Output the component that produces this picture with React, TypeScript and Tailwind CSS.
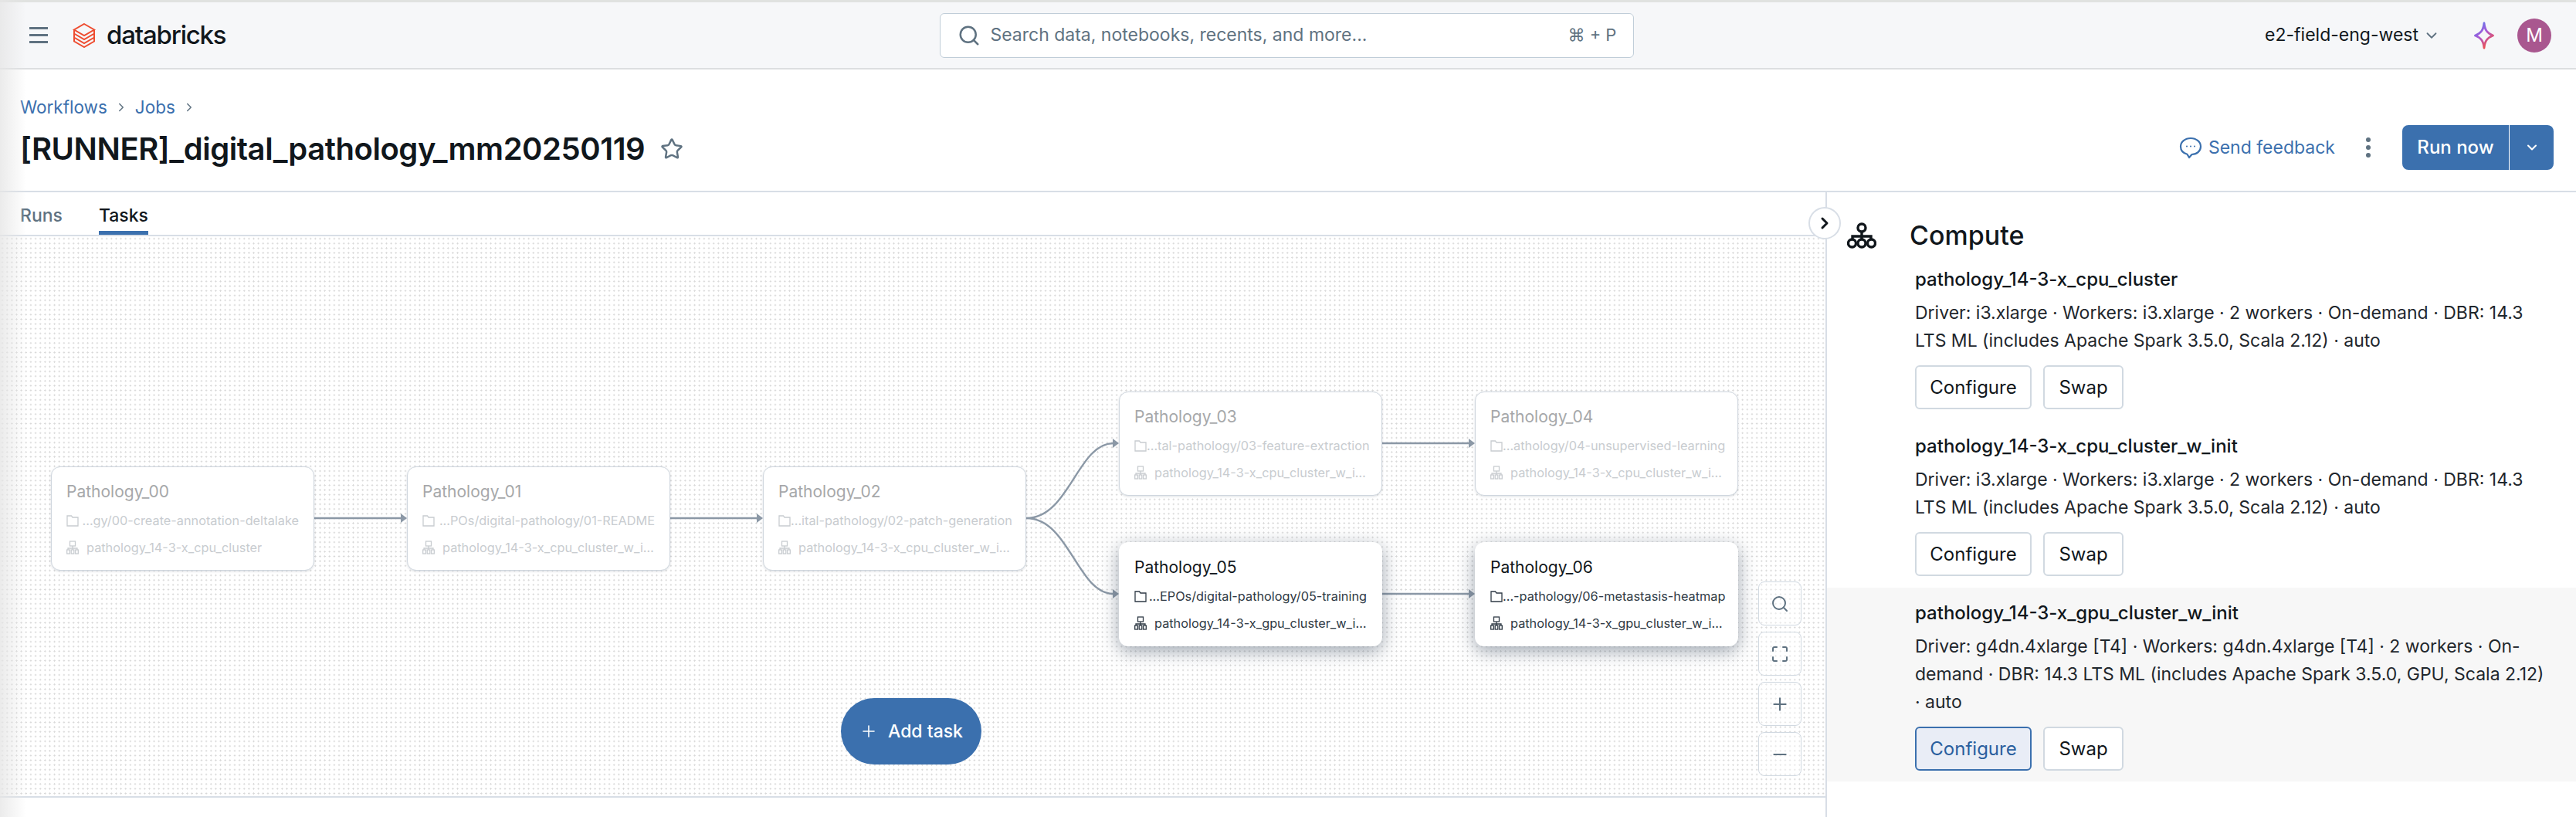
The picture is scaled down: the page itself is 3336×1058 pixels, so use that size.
import React from 'react';
import { ChevronDown, ChevronRight, Maximize, Minus, Plus, Search, Star } from 'lucide-react';

const blue = 'bg-[#3b70ae]';

type TaskNode = {
  name: string;
  path: string;
  cluster: string;
  left: string;
  top: string;
  active?: boolean;
};

const nodes: TaskNode[] = [
  { name: 'Pathology_00', path: '...gy/00-create-annotation-deltalake', cluster: 'pathology_14-3-x_cpu_cluster', left: 'left-[66px]', top: 'top-[298px]' },
  { name: 'Pathology_01', path: '...POs/digital-pathology/01-README', cluster: 'pathology_14-3-x_cpu_cluster_w_init', left: 'left-[527px]', top: 'top-[298px]' },
  { name: 'Pathology_02', path: '...ital-pathology/02-patch-generation', cluster: 'pathology_14-3-x_cpu_cluster_w_init', left: 'left-[988px]', top: 'top-[298px]' },
  { name: 'Pathology_03', path: '...tal-pathology/03-feature-extraction', cluster: 'pathology_14-3-x_cpu_cluster_w_init', left: 'left-[1449px]', top: 'top-[201px]' },
  { name: 'Pathology_04', path: '...athology/04-unsupervised-learning', cluster: 'pathology_14-3-x_cpu_cluster_w_init', left: 'left-[1910px]', top: 'top-[201px]' },
  { name: 'Pathology_05', path: '...EPOs/digital-pathology/05-training', cluster: 'pathology_14-3-x_gpu_cluster_w_init', left: 'left-[1449px]', top: 'top-[396px]', active: true },
  { name: 'Pathology_06', path: '...-pathology/06-metastasis-heatmap', cluster: 'pathology_14-3-x_gpu_cluster_w_init', left: 'left-[1910px]', top: 'top-[396px]', active: true },
];

const clusters = [
  {
    name: 'pathology_14-3-x_cpu_cluster',
    desc: 'Driver: i3.xlarge · Workers: i3.xlarge · 2 workers · On-demand · DBR: 14.3 LTS ML (includes Apache Spark 3.5.0, Scala 2.12) · auto',
    row: 'pb-[31px] pl-[114px] pr-[32px]',
  },
  {
    name: 'pathology_14-3-x_cpu_cluster_w_init',
    desc: 'Driver: i3.xlarge · Workers: i3.xlarge · 2 workers · On-demand · DBR: 14.3 LTS ML (includes Apache Spark 3.5.0, Scala 2.12) · auto',
    row: 'pb-[15px] pl-[114px] pr-[32px]',
  },
  {
    name: 'pathology_14-3-x_gpu_cluster_w_init',
    desc: 'Driver: g4dn.4xlarge [T4] · Workers: g4dn.4xlarge [T4] · 2 workers · On-demand · DBR: 14.3 LTS ML (includes Apache Spark 3.5.0, GPU, Scala 2.12) · auto',
    row: 'bg-[#f7f7f7] pb-[14px] pl-[114px] pr-[32px] pt-[16px]',
    active: true,
  },
];

function Logo() {
  return (
    <svg width="30" height="32" viewBox="0 0 30 32" fill="none" stroke="#ee4c30" strokeWidth="2">
      <path d="M15 1 L28 8.5 L15 16 L2 8.5 Z" />
      <path d="M2 8.5 V13.5 L15 21 L28 13.5 V8.5" />
      <path d="M2 13.5 V18.5 L15 26 L28 18.5 V13.5" />
      <path d="M2 18.5 V23.5 L15 31 L28 23.5 V18.5" />
    </svg>
  );
}

function FolderIcon() {
  return (
    <svg width="16" height="16" viewBox="0 0 16 16" fill="none" stroke="currentColor" strokeWidth="1.3" className="shrink-0">
      <path d="M1 2 H6.5 L8 4 H15 V15 H1 Z" />
    </svg>
  );
}

function ClusterIcon() {
  return (
    <svg width="16" height="18" viewBox="0 0 16 18" fill="none" stroke="currentColor" strokeWidth="1.3" className="shrink-0">
      <rect x="4.5" y="1" width="7" height="6" />
      <path d="M8 7 V10 M2 12 V10 H14 V12 M8 10 V12" />
      <rect x="0.7" y="12" width="3.6" height="5" />
      <rect x="6.2" y="12" width="3.6" height="5" />
      <rect x="11.7" y="12" width="3.6" height="5" />
    </svg>
  );
}

function ComputeIcon() {
  return (
    <svg width="38" height="34" viewBox="0 0 38 34" fill="none" stroke="#11171c" strokeWidth="3.4" className="shrink-0">
      <circle cx="19" cy="7" r="5" />
      <circle cx="6.5" cy="27" r="5" />
      <circle cx="19" cy="27" r="5" />
      <circle cx="31.5" cy="27" r="5" />
      <path d="M19 12 V22 M7 22 V18 H31 V22" />
    </svg>
  );
}

function Sparkle() {
  return (
    <svg width="26" height="36" viewBox="0 0 26 36" fill="none" strokeWidth="2.8">
      <defs>
        <linearGradient id="sparkle" x1="0" y1="0" x2="0.6" y2="1">
          <stop offset="0" stopColor="#4e7df0" />
          <stop offset="0.5" stopColor="#a85ad8" />
          <stop offset="1" stopColor="#f0504a" />
        </linearGradient>
      </defs>
      <path
        d="M13 2 C14 11 17 15 24.5 18 C17 21 14 25 13 34 C12 25 9 21 1.5 18 C9 15 12 11 13 2 Z"
        stroke="url(#sparkle)"
        strokeLinejoin="round"
      />
    </svg>
  );
}

function ChatIcon() {
  return (
    <svg width="30" height="29" viewBox="0 0 30 29" fill="none" stroke="#3b70ae" strokeWidth="2.2">
      <path d="M15 2 C7.5 2 2 6.8 2 12.8 C2 17.6 5.4 21.4 10.5 22.8 L13 27 L16.5 23 C23.4 22.6 28 18.4 28 12.8 C28 6.8 22.5 2 15 2 Z" strokeLinejoin="round" />
      <circle cx="10" cy="12.5" r="1" fill="#3b70ae" stroke="none" />
      <circle cx="15" cy="12.5" r="1" fill="#3b70ae" stroke="none" />
      <circle cx="20" cy="12.5" r="1" fill="#3b70ae" stroke="none" />
    </svg>
  );
}

function NodeCard({ node }: { node: TaskNode }) {
  const shadow = node.active
    ? 'shadow-[0_6px_22px_rgba(60,75,95,0.5)] border-transparent'
    : 'shadow-[0_1px_3px_rgba(60,75,95,0.18)] border-[#cfd6de]';
  return (
    <div className={`absolute ${node.left} ${node.top} flex h-[135px] w-[341px] flex-col rounded-[12px] border bg-white pl-[19px] pr-[19px] pt-[19px] ${shadow}`}>
      <div className={node.active ? 'text-[21px] leading-[26px] text-[#11171c]' : 'text-[21px] leading-[26px] text-[#a6a8aa]'}>
        {node.name}
      </div>
      <div className={node.active ? 'mt-[12px] flex items-center justify-between text-[#2f3a45]' : 'mt-[12px] flex items-center justify-between text-[#c8ccd0]'}>
        <FolderIcon />
        <span className="text-[16.3px] leading-[24px] whitespace-nowrap">{node.path}</span>
      </div>
      <div className={node.active ? 'mt-[11px] flex items-center gap-[10px] text-[#2f3a45]' : 'mt-[11px] flex items-center gap-[10px] text-[#c8ccd0]'}>
        <ClusterIcon />
        <span className="truncate text-[16.3px] leading-[24px]">{node.cluster}</span>
      </div>
    </div>
  );
}

function ZoomButton({ children }: { children: React.ReactNode }) {
  return (
    <div className="flex h-[57px] w-[56px] items-center justify-center rounded-[8px] border border-[#d1d9e1] bg-white/40 text-[#5f7281]">
      {children}
    </div>
  );
}

function Edges() {
  return (
    <svg className="absolute inset-0 h-full w-full" fill="none" stroke="#8b98a6" strokeWidth="2.4">
      <path d="M407 365 H520 M868 365 H981 M1329 365 C1385 365 1395 268 1442 268 M1329 365 C1385 365 1395 463 1442 463 M1790 268 H1903 M1790 463 H1903" />
      <g fill="#8b98a6" stroke="none">
        <path d="M519 359 L527 365 L519 371 Z" />
        <path d="M980 359 L988 365 L980 371 Z" />
        <path d="M1441 262 L1449 268 L1441 274 Z" />
        <path d="M1441 457 L1449 463 L1441 469 Z" />
        <path d="M1902 262 L1910 268 L1902 274 Z" />
        <path d="M1902 457 L1910 463 L1902 469 Z" />
      </g>
    </svg>
  );
}

export default function App() {
  return (
    <div className="relative flex h-[1058px] w-[3336px] flex-col overflow-hidden bg-white font-['Inter',sans-serif] text-[#11171c]">
      <header className="flex h-[90px] shrink-0 items-center border-t-[3px] border-b-[2px] border-t-[#e0e2e0] border-b-[#dcdee0] bg-[#f6f7f9] pl-[38px] pr-[32px]">
        <div className="flex w-[24px] flex-col gap-[6px]">
          <div className="h-[3px] bg-[#5f7281]" />
          <div className="h-[3px] bg-[#5f7281]" />
          <div className="h-[3px] bg-[#5f7281]" />
        </div>
        <div className="ml-[32px] flex items-center gap-[14px]">
          <Logo />
          <span className="text-[33px] font-medium leading-none tracking-[-1.2px]">databricks</span>
        </div>
        <div className="ml-[925px] flex h-[58px] w-[899px] items-center rounded-[6px] border border-[#c0cdd8] bg-white pl-[22px] pr-[22px] text-[#5f7281]">
          <Search size={30} strokeWidth={2} />
          <span className="ml-[12px] flex-1 text-[23px]">Search data, notebooks, recents, and more...</span>
          <span className="text-[22px]">⌘ + P</span>
        </div>
        <div className="ml-auto flex items-center">
          <span className="text-[23px]">e2-field-eng-west</span>
          <ChevronDown size={22} className="ml-[6px] text-[#5f7281]" />
          <div className="ml-[44px]">
            <Sparkle />
          </div>
          <div className="ml-[30px] flex h-[44px] w-[44px] items-center justify-center rounded-full bg-[#a9578f] text-[24px] text-white">
            M
          </div>
        </div>
      </header>

      <div className="flex h-[159px] shrink-0 items-start justify-between border-b-[2px] border-[#d8dee6] pl-[26px] pr-[29px]">
        <div className="pt-[34px]">
          <div className="flex items-center text-[22.5px] leading-[30px] text-[#3b70ae]">
            <span>Workflows</span>
            <ChevronRight size={18} className="mx-[9px] text-[#5f7281]" />
            <span>Jobs</span>
            <ChevronRight size={18} className="mx-[9px] text-[#5f7281]" />
          </div>
          <div className="mt-[13px] flex items-center">
            <span className="text-[40px] font-semibold leading-[52px] tracking-[-0.45px]">[RUNNER]_digital_pathology_mm20250119</span>
            <Star size={30} strokeWidth={2} className="ml-[20px] text-[#5f7281]" />
          </div>
        </div>
        <div className="flex items-center pt-[72px]">
          <ChatIcon />
          <span className="ml-[8px] text-[23px] text-[#3b70ae]">Send feedback</span>
          <div className="ml-[40px] flex flex-col gap-[4px]">
            <div className="h-[6px] w-[6px] rounded-full bg-[#5f7281]" />
            <div className="h-[6px] w-[6px] rounded-full bg-[#5f7281]" />
            <div className="h-[6px] w-[6px] rounded-full bg-[#5f7281]" />
          </div>
          <div className={`ml-[41px] flex h-[58px] w-[196px] items-center rounded-[8px] text-white ${blue}`}>
            <span className="flex h-full w-[138px] items-center justify-center text-[24px] font-medium">Run now</span>
            <div className="flex h-full flex-1 items-center justify-center border-l border-white">
              <ChevronDown size={20} strokeWidth={2.5} />
            </div>
          </div>
        </div>
      </div>

      <div className="flex min-h-0 flex-1">
        <div className="flex w-[2364px] shrink-0 flex-col">
          <div className="flex h-[57px] shrink-0 items-end gap-[47px] border-b-[2px] border-[#d8dee6] pl-[26px]">
            <span className="pb-[10px] text-[23px] font-medium leading-[30px] text-[#5f7281]">Runs</span>
            <span className="border-b-[5px] border-[#3b70ae] pb-[5px] text-[23px] font-medium leading-[30px]">Tasks</span>
          </div>
          <div className="relative h-[727px] shrink-0 border-b-[2px] border-[#d8dee6] bg-[radial-gradient(#d9d9d9_1px,transparent_1.2px)] bg-[size:6.15px_6.15px]">
            <Edges />
            {nodes.map(node => (
              <NodeCard key={node.name} node={node} />
            ))}
            <div className={`absolute left-[1089px] top-[598px] flex h-[86px] w-[182px] items-center justify-center gap-[13px] rounded-full text-[23px] font-medium text-white ${blue}`}>
              <Plus size={24} strokeWidth={1.6} />
              <span>Add task</span>
            </div>
            <div className="absolute left-[2277px] top-[447px] flex flex-col gap-[8px]">
              <ZoomButton>
                <Search size={24} strokeWidth={2} />
              </ZoomButton>
              <ZoomButton>
                <Maximize size={24} strokeWidth={2} />
              </ZoomButton>
              <ZoomButton>
                <Plus size={26} strokeWidth={2} />
              </ZoomButton>
              <ZoomButton>
                <Minus size={26} strokeWidth={2} />
              </ZoomButton>
            </div>
          </div>
        </div>

        <aside className="relative flex-1 border-l-[2px] border-[#d8dee6]">
          <div className="absolute left-[-24px] top-[19px] flex h-[42px] w-[42px] items-center justify-center rounded-full border-[2px] border-[#d8dee6] bg-white">
            <ChevronRight size={24} strokeWidth={3} />
          </div>
          <div className="flex h-[96px] items-center pl-[26px] pt-[16px]">
            <ComputeIcon />
            <span className="ml-[43px] text-[34px] font-medium leading-none">Compute</span>
          </div>
          <div className="flex flex-col">
            {clusters.map(c => (
              <div key={c.name} className={c.row}>
                <div className="text-[24px] font-medium leading-[34px]">{c.name}</div>
                <div className="mt-[8px] text-[23px] leading-[36px] text-[#1f272d]">{c.desc}</div>
                <div className="mt-[14px] flex gap-[15px]">
                  <div className={c.active ? 'flex h-[57px] w-[151px] items-center justify-center rounded-[6px] border-[2px] border-[#3b70ae] bg-[#e9edf6] text-[24px] text-[#2a5f9e]' : 'flex h-[57px] w-[151px] items-center justify-center rounded-[6px] border-[2px] border-[#d1d9e1] bg-white text-[24px]'}>
                    Configure
                  </div>
                  <div className="flex h-[57px] w-[104px] items-center justify-center rounded-[6px] border-[2px] border-[#d1d9e1] bg-white text-[24px]">
                    Swap
                  </div>
                </div>
              </div>
            ))}
          </div>
        </aside>
      </div>

      <div className="pointer-events-none absolute bottom-0 left-0 top-0 w-[34px] bg-gradient-to-r from-[#e6e6e6]/80 to-transparent" />
    </div>
  );
}
